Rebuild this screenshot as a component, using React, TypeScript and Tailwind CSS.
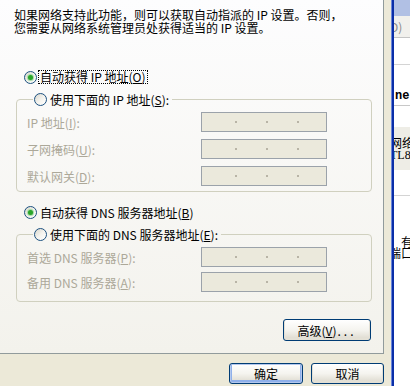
import React from "react";

function Radio({ checked }: { checked?: boolean }) {
  return (
    <span className="w-[13px] h-[13px] shrink-0 rounded-full border border-[#1c5180] bg-gradient-to-br from-[#d8d6cc] via-[#f4f3ee] to-white flex items-center justify-center">
      {checked && (
        <span className="w-[5px] h-[5px] rounded-full bg-[#2aa52a] shadow-[0_0_1px_1px_#9fd89f]" />
      )}
    </span>
  );
}

function Key({ k }: { k: string }) {
  return (
    <>
      (<u className="underline-offset-[1px]">{k}</u>)
    </>
  );
}

function IpBox() {
  return (
    <div className="w-[126px] h-[20px] border border-[#9ba2aa] bg-[#ebe9dc] flex items-center pl-[33px] gap-[29px]">
      <span className="w-[2px] h-[2px] bg-[#b8b4a6]" />
      <span className="w-[2px] h-[2px] bg-[#b8b4a6]" />
      <span className="w-[2px] h-[2px] bg-[#b8b4a6]" />
    </div>
  );
}

function Field({ label }: { label: React.ReactNode }) {
  return (
    <div className="flex items-center">
      <span className="w-[174px] text-[#aca899]">{label}</span>
      <IpBox />
    </div>
  );
}

function XpButton({ children, primary, className }: { children: React.ReactNode; primary?: boolean; className: string }) {
  return (
    <button
      className={
        "rounded-[3px] border border-[#003c74] bg-gradient-to-b from-white via-[#f5f4ef] to-[#dcd8cc] text-black flex items-center justify-center " +
        (primary ? "shadow-[inset_0_0_0_1px_#b4c8ee,inset_0_-1px_0_2px_#8fb0ea] " : "shadow-[inset_0_-1px_0_1px_#e3e0d5] ") +
        className
      }
    >
      {children}
    </button>
  );
}

export default function App() {
  return (
    <div className="w-[410px] h-[386px] flex overflow-hidden font-['Noto_Sans_CJK_SC',sans-serif] text-[12px] leading-[13px] text-black">
      {/* dialog */}
      <div className="w-[391px] bg-[#ece9d8] flex flex-col">
        <div className="w-[384px] h-[354px] border-r border-b border-[#919b9c] bg-gradient-to-b from-[#fdfdfe] to-[#f3f2ec] pt-[8px] flex flex-col">
          <p className="pl-[14px]">
            如果网络支持此功能，则可以获取自动指派的 IP 设置。否则，
            <br />
            您需要从网络系统管理员处获得适当的 IP 设置。
          </p>

          <div className="mt-[35px] h-[16px] pl-[24px] flex items-center gap-[1px]">
            <Radio checked />
            <span className="border border-dotted border-black px-[1px] leading-[12px]">
              自动获得 IP 地址<Key k="O" />
            </span>
          </div>

          <fieldset className="mt-[6px] ml-[16px] w-[356px] border border-[#d0d0bf] rounded-[4px] pt-[5px] pb-[5px] pl-[10px] flex flex-col gap-[7px]">
            <legend className="ml-[6px] pl-[1px] pr-[3px] h-[16px] flex items-center gap-[3px]">
              <Radio />
              <span>
                使用下面的 IP 地址<Key k="S" />:
              </span>
            </legend>
            <Field label={<>IP 地址<Key k="I" />:</>} />
            <Field label={<>子网掩码<Key k="U" />:</>} />
            <Field label={<>默认网关<Key k="D" />:</>} />
          </fieldset>

          <div className="mt-[12px] h-[16px] pl-[24px] flex items-center gap-[3px]">
            <Radio checked />
            <span>
              自动获得 DNS 服务器地址<Key k="B" />
            </span>
          </div>

          <fieldset className="mt-[6px] ml-[16px] w-[356px] border border-[#d0d0bf] rounded-[4px] pt-[5px] pb-[9px] pl-[10px] flex flex-col gap-[5px]">
            <legend className="ml-[6px] pl-[1px] pr-[3px] h-[16px] flex items-center gap-[3px]">
              <Radio />
              <span>
                使用下面的 DNS 服务器地址<Key k="E" />:
              </span>
            </legend>
            <Field label={<>首选 DNS 服务器<Key k="P" />:</>} />
            <Field label={<>备用 DNS 服务器<Key k="A" />:</>} />
          </fieldset>

          <div className="mt-[17px] ml-[16px] w-[355px] flex justify-end">
            <XpButton className="w-[88px] h-[22px]">
              高级<Key k="V" /><span className="tracking-[3px] ml-[1px]">...</span>
            </XpButton>
          </div>
        </div>

        <div className="flex justify-end gap-[8px] pr-[7px] pt-[9px]">
          <XpButton primary className="w-[74px] h-[21px]">确定</XpButton>
          <XpButton className="w-[73px] h-[21px]">取消</XpButton>
        </div>
      </div>

      {/* window frame */}
      <div className="w-[3px] bg-[#0a2ea8] border-l border-[#6b86d8]" />

      {/* window behind */}
      <div className="flex-1 bg-white flex flex-col overflow-hidden whitespace-nowrap">
        <div className="h-[16px] bg-[#b1c0e4]" />
        <div className="h-[22px] bg-[#f1f0ec] border-b border-[#c4c4c4] flex items-center text-[#8a8a8a] -ml-[4px]">D)</div>
        <div className="h-[27px] border-b border-[#d4d4d4]" />
        <div className="h-[24px]" />
        <div className="h-[14px] font-['Liberation_Mono',monospace] font-bold leading-[14px] pl-[1px]">net</div>
        <div className="h-[1px] bg-[#c8c8c8] mt-[2px]" />
        <div className="h-[21px]" />
        <div className="h-[43px] bg-[#eeede6] flex flex-col justify-center -ml-[4px]">
          <span>网络</span>
          <span className="font-['Liberation_Serif',serif]">TL8</span>
        </div>
        <div className="h-[25px]" />
        <div className="h-[1px] bg-[#d4d4d4]" />
        <div className="h-[40px]" />
        <div className="pl-[7px] leading-[11px]">有</div>
        <div className="-ml-[5px] leading-[11px]">端口</div>
      </div>
    </div>
  );
}
